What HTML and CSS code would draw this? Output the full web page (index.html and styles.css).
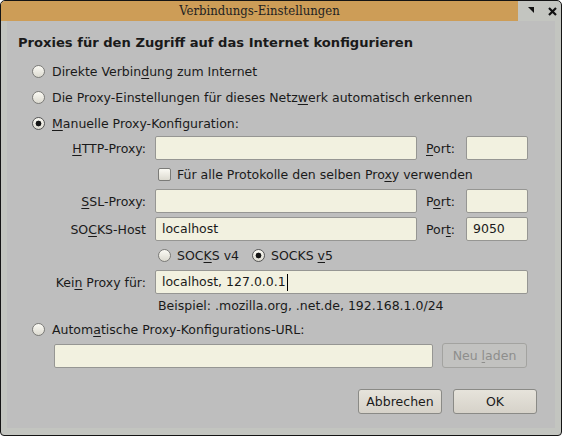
FILE: index.html
```html
<!DOCTYPE html>
<html lang="de">
<head>
<meta charset="utf-8">
<title>Verbindungs-Einstellungen</title>
<link rel="stylesheet" href="styles.css">
</head>
<body>
<div class="window">
  <div class="titlebar">
    <div class="title">Verbindungs-Einstellungen</div>
    <div class="controls">
      <svg class="ico-tri" width="6" height="6" viewBox="0 0 6 6"><polygon points="0,0 6,0 6,6" fill="#111"/></svg>
      <svg class="ico-x" width="9" height="9" viewBox="0 0 9 9"><path d="M1 1 L8 8 M8 1 L1 8" stroke="#111" stroke-width="2.2" fill="none"/></svg>
    </div>
  </div>
  <div class="panel">
    <div class="heading">Proxies für den Zugriff auf das Internet konfigurieren</div>
    <div class="radio-row"><span class="radio"></span><span>Direkte Verbin<u>d</u>ung zum Internet</span></div>
    <div class="radio-row"><span class="radio"></span><span>Die Proxy-Einstellungen für dieses Netz<u>w</u>erk automatisch erkennen</span></div>
    <div class="radio-row"><span class="radio checked"></span><span><u>M</u>anuelle Proxy-Konfiguration:</span></div>

    <div class="manual">
      <div class="frow">
        <span class="lbl"><u>H</u>TTP-Proxy:</span>
        <span class="field main"></span>
        <span class="plbl"><u>P</u>ort:</span>
        <span class="field port"></span>
      </div>
      <div class="crow">
        <span class="check"></span><span>Für alle Protokolle den selben Pro<u>x</u>y verwenden</span>
      </div>
      <div class="frow">
        <span class="lbl"><u>S</u>SL-Proxy:</span>
        <span class="field main"></span>
        <span class="plbl">P<u>o</u>rt:</span>
        <span class="field port"></span>
      </div>
      <div class="frow socks">
        <span class="lbl">SO<u>C</u>KS-Host</span>
        <span class="field main"><span>localhost</span></span>
        <span class="plbl">Por<u>t</u>:</span>
        <span class="field port"><span>9050</span></span>
      </div>
      <div class="crow">
        <span class="radio"></span><span class="v4">SOC<u>K</u>S v4</span>
        <span class="radio checked"></span><span>SOCKS <u>v</u>5</span>
      </div>
      <div class="frow">
        <span class="lbl">Kei<u>n</u> Proxy für:</span>
        <span class="field wide"><span>localhost, 127.0.0.1</span><span class="caret"></span></span>
      </div>
      <div class="hint">Beispiel: .mozilla.org, .net.de, 192.168.1.0/24</div>
    </div>

    <div class="radio-row auto"><span class="radio"></span><span>Autom<u>a</u>tische Proxy-Konfigurations-URL:</span></div>
    <div class="url-row">
      <span class="field url"></span>
      <span class="btn disabled"><span>Neu <u>l</u>aden</span></span>
    </div>

    <div class="buttons">
      <span class="btn"><span>Abbrechen</span></span>
      <span class="btn"><span>OK</span></span>
    </div>
  </div>
</div>
</body>
</html>
```

FILE: styles.css
```css
html, body {
  margin: 0;
  padding: 0;
  background: #ffffff;
}

.window {
  width: 562px;
  height: 436px;
  box-sizing: border-box;
  border: 1px solid #141414;
  border-radius: 5px 5px 4px 4px;
  background: #c3c5c0;
  display: flex;
  flex-direction: column;
  overflow: hidden;
}

.titlebar {
  height: 20px;
  display: flex;
  flex: none;
}

.title {
  width: 517px;
  background: #cd9d57;
  border-top-left-radius: 4px;
  font-family: "DejaVu Serif", serif;
  font-stretch: condensed;
  font-size: 13px;
  line-height: 20px;
  text-align: center;
  color: #222;
}

.controls {
  flex: 1;
  display: flex;
  align-items: flex-start;
  padding-left: 10px;
}

.ico-tri {
  margin-top: 6px;
}

.ico-x {
  margin-top: 6px;
  margin-left: 14px;
}

.panel {
  flex: 1;
  margin: 0 6px 7px 6px;
  background: #bebebe;
  display: flex;
  flex-direction: column;
  font-family: "DejaVu Sans", sans-serif;
  font-size: 12.5px;
  color: #1a1a1a;
}

u {
  text-decoration-thickness: 1px;
  text-underline-offset: 2px;
}

.heading {
  margin-top: 10px;
  height: 24px;
  line-height: 24px;
  padding-left: 11px;
  font-weight: bold;
  font-size: 13.1px;
}

.radio-row {
  height: 26px;
  display: flex;
  align-items: center;
  padding-left: 25px;
  gap: 7px;
}

.heading + .radio-row {
  margin-top: 3px;
}

.radio {
  flex: none;
  width: 13px;
  height: 13px;
  box-sizing: border-box;
  border-radius: 50%;
  border: 1px solid #7b7b78;
  background: linear-gradient(#fbfaf4, #dcdad0);
}

.radio.checked {
  border-color: #555;
  background: radial-gradient(circle at 50% 50%, #141414 0, #141414 2.6px, transparent 3.2px), linear-gradient(#fbfaf4, #dcdad0);
}

.check {
  flex: none;
  width: 13px;
  height: 13px;
  box-sizing: border-box;
  border-radius: 2px;
  border: 1px solid #7b7b78;
  background: linear-gradient(#fbfaf4, #dcdad0);
}

.manual {
  margin-left: 44px;
  display: flex;
  flex-direction: column;
}

.frow {
  height: 24px;
  display: flex;
  align-items: center;
}

.frow.socks {
  margin-top: 4px;
}

.lbl {
  width: 95px;
  text-align: right;
  margin-right: 9px;
}

.plbl {
  width: 31px;
  margin: 0 9px;
}

.field {
  box-sizing: border-box;
  height: 24px;
  background: #f2f1e0;
  border: 1px solid #969693;
  border-radius: 2px;
  padding-left: 6px;
  line-height: 22px;
  display: flex;
  align-items: center;
}

.field.main {
  width: 262px;
}

.field.port {
  width: 62px;
}

.field.wide {
  width: 373px;
}

.caret {
  display: inline-block;
  width: 1px;
  height: 17px;
  background: #000;
  margin-left: 1px;
}

.crow {
  height: 29px;
  display: flex;
  align-items: center;
  padding-left: 107px;
  gap: 6px;
}

.crow .v4 {
  margin-right: 7px;
}

.hint {
  height: 23px;
  line-height: 23px;
  padding-left: 107px;
}

.radio-row.auto {
  height: 24px;
}

.url-row {
  margin-top: 2px;
  height: 25px;
  display: flex;
  align-items: center;
  padding-left: 47px;
}

.field.url {
  width: 379px;
}

.btn {
  box-sizing: border-box;
  height: 25px;
  border: 1px solid #8a8a86;
  border-radius: 3px;
  background: linear-gradient(#e6e3db, #d6d2c9);
  display: flex;
  align-items: center;
  justify-content: center;
  width: 84px;
}

.btn.disabled {
  margin-left: 9px;
  width: 85px;
  color: #8e8e8c;
  border-color: #a3a3a0;
  background: #c2c2c0;
}

.buttons {
  margin-top: 21px;
  display: flex;
  justify-content: flex-end;
  padding-right: 18px;
  gap: 11px;
}
```
